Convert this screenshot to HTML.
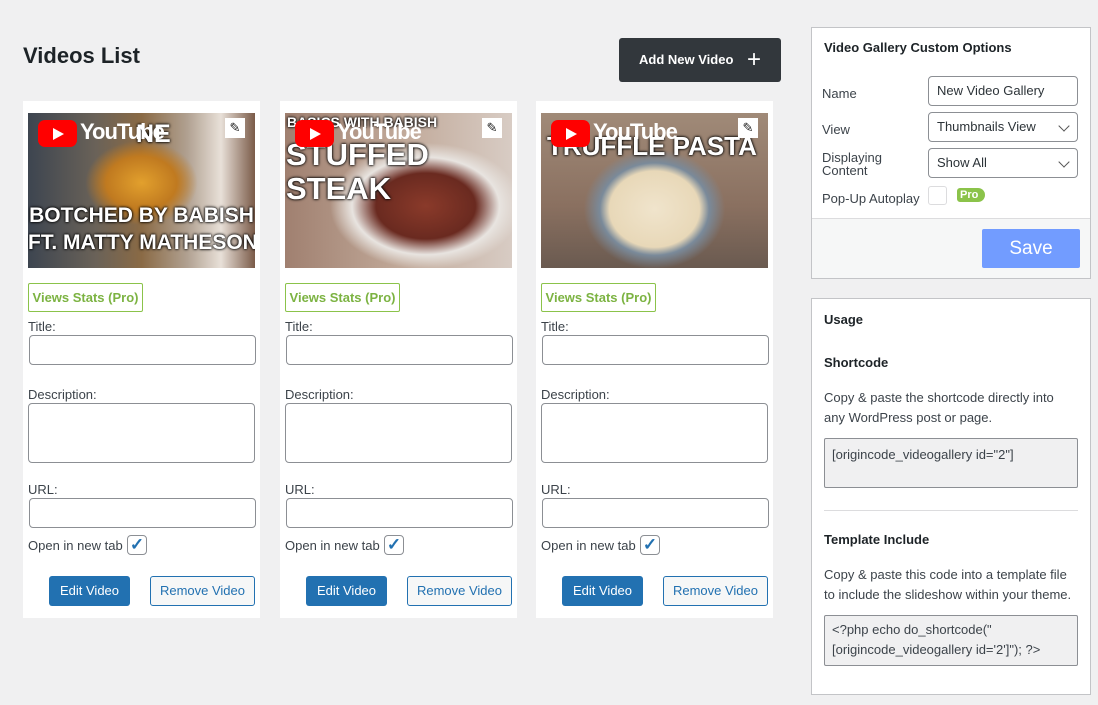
<!DOCTYPE html>
<html><head><meta charset="utf-8"><style>
*{box-sizing:border-box;margin:0;padding:0}
body{width:1098px;height:705px;background:#f0f0f1;font-family:"Liberation Sans",sans-serif;font-size:13px;color:#3c434a;position:relative;overflow:hidden}
.abs{position:absolute}
h1{position:absolute;left:23px;top:43px;font-size:22px;font-weight:600;color:#1d2327}
.addbtn{left:619px;top:38px;width:162px;height:44px;background:#32373c;border-radius:3px;color:#fff;font-weight:bold;font-size:13px;line-height:44px;padding-left:20px}
.addbtn span{position:absolute;right:20px;top:0;font-size:24px;font-weight:normal}
.card{position:absolute;top:101px;width:237px;height:517px;background:#fff}
.thumb{position:absolute;left:5px;top:12px;width:227px;height:155px;overflow:hidden}
.yt{position:absolute;left:10px;top:7px;width:39px;height:27px;background:#f00;border-radius:7px}
.yt:after{content:"";position:absolute;left:15px;top:8px;border-left:11px solid #fff;border-top:6px solid transparent;border-bottom:6px solid transparent}
.ytt{position:absolute;left:52px;top:6px;color:#fff;font-size:22px;font-weight:bold;letter-spacing:-1px}
.pen{position:absolute;right:10px;top:5px;width:20px;height:20px;background:#fff;font-size:13px;text-align:center;line-height:20px;color:#222}
.big{position:absolute;color:#fff;font-weight:bold;text-shadow:0 0 3px #000,0 0 2px #000;white-space:nowrap;font-family:"Liberation Sans",sans-serif}
.vs{position:absolute;left:5px;top:182px;width:115px;height:29px;border:1px solid #8bc34a;color:#7cb342;font-weight:bold;font-size:13px;line-height:27px;text-align:center;border-radius:2px}
.lbl{position:absolute;left:5px;font-size:13px}
.inp{position:absolute;left:6px;width:227px;height:30px;border:1px solid #8c8f94;border-radius:4px;background:#fff}
.ta{height:60px}
.cb{position:absolute;width:20px;height:20px;border:1px solid #8c8f94;border-radius:4px;background:#fff;color:#2271b1;font-size:17px;line-height:18px;text-align:center;font-weight:bold}
.edit{position:absolute;left:26px;top:475px;width:81px;height:30px;background:#2271b1;border-radius:3px;color:#fff;text-align:center;line-height:30px;font-size:13px}
.rem{position:absolute;left:127px;top:475px;width:105px;height:30px;border:1px solid #2271b1;background:#f6f7f7;border-radius:3px;color:#2271b1;text-align:center;line-height:28px;font-size:13px}
.panel{position:absolute;background:#fff;border:1px solid #c3c4c7}
.sel{position:absolute;left:116px;width:150px;height:30px;border:1px solid #8c8f94;border-radius:4px;padding-left:8px;line-height:28px;font-size:13px;color:#2c3338;background:#fff}
.chev{position:absolute;right:9px;top:9px;width:8px;height:8px;border-right:1.5px solid #555;border-bottom:1.5px solid #555;transform:rotate(45deg)}
.code{position:absolute;left:12px;width:254px;background:#f0f0f1;border:1px solid #8c8f94;border-radius:2px;padding:6px 7px;font-size:13px;line-height:20px;color:#3c434a}
</style></head><body>
<h1>Videos List</h1>
<div class="abs addbtn">Add New Video<span>+</span></div>

<!-- card 1 -->
<div class="card" style="left:23px">
 <div class="thumb" style="background:radial-gradient(ellipse at 50% 45%,#e2a02d 0,#c07a20 22%,transparent 35%),linear-gradient(90deg,#3d4550 0,#6a6258 30%,#8a6a45 50%,#b0a090 70%,#e8e0d8 85%,#7a5a48 100%)">
  <div class="big" style="left:0;top:91px;font-size:21px;width:227px;text-align:center">BOTCHED BY BABISH</div>
  <div class="big" style="left:0;top:118px;font-size:21px;width:227px;text-align:center">FT. MATTY MATHESON</div>
  <div class="big" style="left:108px;top:7px;font-size:25px">NE</div>
  <div class="yt"></div><div class="ytt">YouTube</div><div class="pen">✎</div>
 </div>
 <div class="vs">Views Stats (Pro)</div>
 <div class="lbl" style="top:218px">Title:</div><div class="inp" style="top:234px"></div>
 <div class="lbl" style="top:286px">Description:</div><div class="inp ta" style="top:302px;left:5px"></div>
 <div class="lbl" style="top:381px">URL:</div><div class="inp" style="top:397px"></div>
 <div class="lbl" style="top:437px">Open in new tab</div><div class="cb" style="left:104px;top:434px">✓</div>
 <div class="edit">Edit Video</div><div class="rem">Remove Video</div>
</div>

<!-- card 2 -->
<div class="card" style="left:280px">
 <div class="thumb" style="background:radial-gradient(ellipse at 62% 60%,#8a3a2a 0,#6a2a20 25%,#e8e4e0 37%,transparent 48%),linear-gradient(90deg,#a08070,#c0a898 50%,#d8ccc4)">
  <div class="big" style="left:2px;top:1px;font-size:14px">BASICS WITH BABISH</div>
  <div class="big" style="left:1px;top:24px;font-size:31px">STUFFED</div>
  <div class="big" style="left:1px;top:58px;font-size:31px">STEAK</div>
  <div class="yt"></div><div class="ytt">YouTube</div><div class="pen">✎</div>
 </div>
 <div class="vs">Views Stats (Pro)</div>
 <div class="lbl" style="top:218px">Title:</div><div class="inp" style="top:234px"></div>
 <div class="lbl" style="top:286px">Description:</div><div class="inp ta" style="top:302px;left:5px"></div>
 <div class="lbl" style="top:381px">URL:</div><div class="inp" style="top:397px"></div>
 <div class="lbl" style="top:437px">Open in new tab</div><div class="cb" style="left:104px;top:434px">✓</div>
 <div class="edit">Edit Video</div><div class="rem">Remove Video</div>
</div>

<!-- card 3 -->
<div class="card" style="left:536px">
 <div class="thumb" style="background:radial-gradient(ellipse at 50% 62%,#f0e4cc 0,#e8d8b8 28%,#7a8a9a 34%,transparent 44%),linear-gradient(180deg,#a08a78,#8a7060 60%,#6a5a50)">
  <div class="big" style="left:6px;top:18px;font-size:26px">TRUFFLE PASTA</div>
  <div class="yt"></div><div class="ytt">YouTube</div><div class="pen">✎</div>
 </div>
 <div class="vs">Views Stats (Pro)</div>
 <div class="lbl" style="top:218px">Title:</div><div class="inp" style="top:234px"></div>
 <div class="lbl" style="top:286px">Description:</div><div class="inp ta" style="top:302px;left:5px"></div>
 <div class="lbl" style="top:381px">URL:</div><div class="inp" style="top:397px"></div>
 <div class="lbl" style="top:437px">Open in new tab</div><div class="cb" style="left:104px;top:434px">✓</div>
 <div class="edit">Edit Video</div><div class="rem">Remove Video</div>
</div>

<!-- options panel -->
<div class="panel" style="left:811px;top:27px;width:280px;height:252px;overflow:hidden">
 <div class="abs" style="left:12px;top:12px;font-weight:bold;color:#1d2327">Video Gallery Custom Options</div>
 <div class="abs" style="left:10px;top:58px">Name</div>
 <div class="sel" style="top:48px">New Video Gallery</div>
 <div class="abs" style="left:10px;top:94px">View</div>
 <div class="sel" style="top:84px">Thumbnails View<div class="chev"></div></div>
 <div class="abs" style="left:10px;top:123px;line-height:13px">Displaying<br>Content</div>
 <div class="sel" style="top:120px">Show All<div class="chev"></div></div>
 <div class="abs" style="left:10px;top:163px">Pop-Up Autoplay</div>
 <div class="abs" style="left:116px;top:158px;width:19px;height:19px;border:1px solid #dcdcde;border-radius:3px"></div>
 <div class="abs" style="left:145px;top:160px;width:28px;height:14px;background:#8bc34a;border-radius:3px 7px 7px 3px;color:#fff;font-size:11px;font-weight:bold;line-height:14px;padding-left:3px">Pro</div>
 <div class="abs" style="left:0;right:0;top:190px;bottom:0;background:#f6f7f7;border-top:1px solid #dcdcde"></div>
 <div class="abs" style="left:170px;top:201px;width:98px;height:39px;background:#729cff;border-radius:2px;color:#fff;font-size:19px;text-align:center;line-height:39px">Save</div>
</div>

<!-- usage panel -->
<div class="panel" style="left:811px;top:298px;width:280px;height:397px">
 <div class="abs" style="left:12px;top:13px;font-weight:bold;color:#1d2327">Usage</div>
 <div class="abs" style="left:12px;top:56px;font-weight:bold;color:#1d2327">Shortcode</div>
 <div class="abs" style="left:12px;top:89px;width:240px;line-height:20px">Copy &amp; paste the shortcode directly into any WordPress post or page.</div>
 <div class="code" style="top:139px;height:50px">[origincode_videogallery id="2"]</div>
 <div class="abs" style="left:12px;top:211px;width:254px;border-top:1px solid #dcdcde"></div>
 <div class="abs" style="left:12px;top:233px;font-weight:bold;color:#1d2327">Template Include</div>
 <div class="abs" style="left:12px;top:266px;width:250px;line-height:20px">Copy &amp; paste this code into a template file to include the slideshow within your theme.</div>
 <div class="code" style="top:316px;height:51px;padding-top:4px">&lt;?php echo do_shortcode("<br>[origincode_videogallery id='2']"); ?&gt;</div>
</div>
</body></html>
